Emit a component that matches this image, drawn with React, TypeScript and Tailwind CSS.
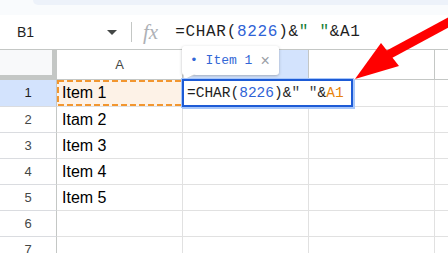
import React from "react";

const rows = ["Item 1", "Itam 2", "Item 3", "Item 4", "Item 5", "", ""];

export default function App() {
  return (
    <div className="relative h-[253px] w-[448px] overflow-hidden bg-white font-['Liberation_Sans',Arial,sans-serif] text-[#1f1f1f]">
      {/* top strip */}
      <div className="flex h-[15px] bg-[#f9fbfd]">
        <div className="w-[33px]" />
        <div className="h-[5px] flex-1 rounded-bl-[12px] bg-[#edf2fa]" />
      </div>

      {/* formula bar */}
      <div className="flex h-[34px] items-center bg-white">
        <div className="flex w-[131px] items-center pl-[17px] pr-[14px]">
          <span className="text-[14px] leading-none">B1</span>
          <span className="ml-auto h-0 w-0 border-x-[5px] border-t-[5px] border-x-transparent border-t-[#444746]" />
        </div>
        <div className="h-[20px] w-px bg-[#c4c7c5]" />
        <span className="ml-[11px] font-['Liberation_Serif',serif] text-[21px] italic leading-none text-[#aeb1b6]">
          fx
        </span>
        <span className="ml-[17px] whitespace-pre font-['Liberation_Mono',monospace] text-[16px] leading-none tracking-[0.7px] text-[#1f1f1f]">
          =CHAR(<span className="text-[#2f63d6]">8226</span>)&amp;<span className="text-[#188038]">" "</span>&amp;A1
        </span>
      </div>

      {/* column header row */}
      <div className="flex h-[31px] border-t border-[#c4c7c5]">
        <div className="h-full w-[57px] border-b-[5px] border-r-[5px] border-[#c4c7c5] bg-[#f8f9fa]" />
        <div className="flex h-full w-[126px] items-center justify-center border-b border-r border-[#c4c7c5] text-[13px] text-[#444746]">
          A
        </div>
        <div className="h-full w-[126px] border-b border-r border-[#c4c7c5] bg-[#d3e3fd]" />
        <div className="flex h-full w-[126px] items-center justify-center border-b border-r border-[#c4c7c5] text-[13px] text-[#444746]">
          C
        </div>
        <div className="h-full flex-1 border-b border-[#c4c7c5]" />
      </div>

      {/* rows */}
      {rows.map((v, i) => (
        <div key={i} className={`flex ${i === 0 ? "h-[27px]" : "h-[26px]"}`}>
          <div
            className={`flex h-full w-[57px] items-center justify-center border-b border-r border-b-[#dadce0] border-r-[#c4c7c5] text-[13px] ${
              i === 0 ? "bg-[#d3e3fd] text-[#1f1f1f]" : "text-[#444746]"
            }`}
          >
            {i + 1}
          </div>
          <div
            className={`relative flex h-full w-[126px] items-center border-b border-r border-[#e1e1e1] pl-[5px] text-[16px] text-black ${
              i === 0 ? "bg-[#fdf2e7]" : ""
            }`}
          >
            {v}
            {i === 0 && (
              <svg className="absolute left-0 top-0" width="126" height="26">
                <rect
                  x="1"
                  y="1"
                  width="126"
                  height="24"
                  fill="none"
                  stroke="#f2962f"
                  strokeWidth="2"
                  strokeDasharray="6 3"
                />
              </svg>
            )}
          </div>
          <div className="h-full w-[126px] border-b border-r border-[#e1e1e1]" />
          <div className="h-full w-[126px] border-b border-r border-[#e1e1e1]" />
          <div className="h-full flex-1 border-b border-[#e1e1e1]" />
        </div>
      ))}

      {/* chip tooltip */}
      <div className="absolute left-[182px] top-[46px] flex h-[29px] w-[97px] items-center rounded-[3px] bg-white pl-[8px] shadow-[0_1px_3px_rgba(60,64,67,0.35)]">
        <span className="whitespace-pre font-['Liberation_Mono',monospace] text-[13px] leading-none text-[#3367d6]">
          • Item 1
        </span>
        <span className="ml-[8px] text-[16px] leading-none text-[#9aa0a6]">×</span>
      </div>
      <svg className="absolute left-[182px] top-[73px]" width="18" height="9">
        <polygon points="1,0 15,0 2,7" fill="white" stroke="#d0d0d0" strokeWidth="0.8" />
        <rect x="0.5" y="0" width="15" height="1.5" fill="white" />
      </svg>

      {/* edit box */}
      <div className="absolute left-[182px] top-[79px] flex h-[28px] w-[171px] items-center border-2 border-[#1d5bd6] bg-white pl-[3px] shadow-[0_0_0_1px_#a8c7fa,1px_1px_0_1px_#a8c7fa]">
        <span className="whitespace-pre font-['Liberation_Mono',monospace] text-[14.5px] leading-none text-[#1f1f1f]">
          =CHAR(<span className="text-[#2f63d6]">8226</span>)&amp;<span className="text-[#3c4043]">" "</span>&amp;<span className="text-[#e8830c]">A1</span>
        </span>
      </div>

      {/* red arrow */}
      <svg className="pointer-events-none absolute left-0 top-0" width="448" height="253">
        <line x1="388" y1="55" x2="462" y2="15" stroke="#ff0000" strokeWidth="9" />
        <polygon points="355,79 381,43 399,66" fill="#ff0000" />
      </svg>
    </div>
  );
}
